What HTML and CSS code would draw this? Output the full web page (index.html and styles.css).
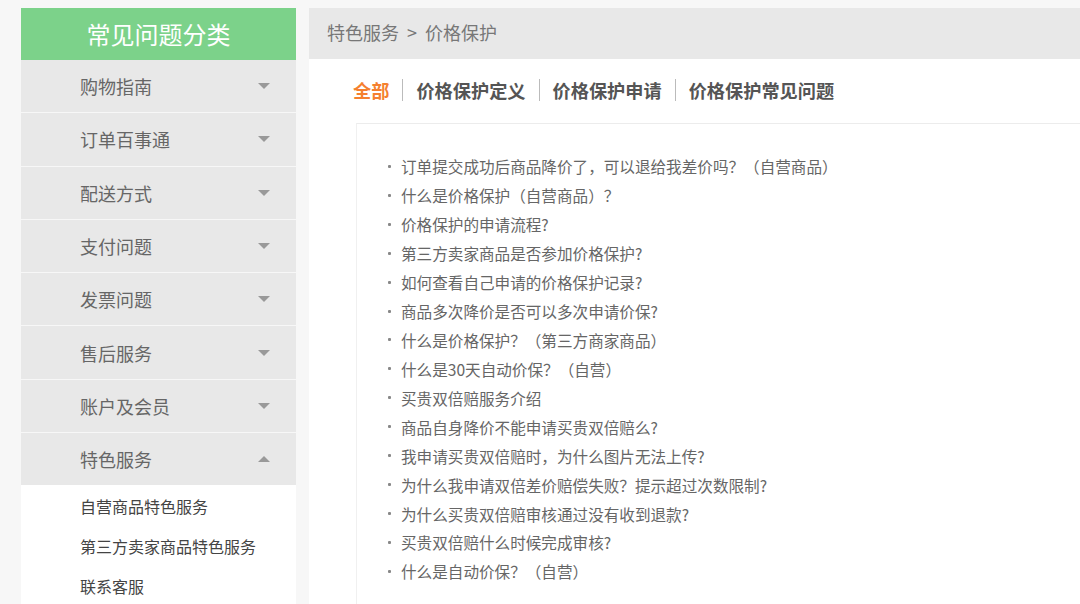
FILE: index.html
```html
<!DOCTYPE html>
<html lang="zh-CN">

<head>
    <meta charset="UTF-8">
    <meta name="viewport" content="width=device-width, initial-scale=1.0">
    <title>常见问题 - 价格保护</title>
    <link rel="stylesheet" href="styles.css">
</head>

<body>

    <div class="page">

        <!-- Sidebar -->
        <div class="sidebar">
            <div class="sidebar-title">常见问题分类</div>
            <ul class="menu">
                <li class="menu-item"><span>购物指南</span><i class="arrow down"></i></li>
                <li class="menu-item"><span>订单百事通</span><i class="arrow down"></i></li>
                <li class="menu-item"><span>配送方式</span><i class="arrow down"></i></li>
                <li class="menu-item"><span>支付问题</span><i class="arrow down"></i></li>
                <li class="menu-item"><span>发票问题</span><i class="arrow down"></i></li>
                <li class="menu-item"><span>售后服务</span><i class="arrow down"></i></li>
                <li class="menu-item"><span>账户及会员</span><i class="arrow down"></i></li>
                <li class="menu-item open"><span>特色服务</span><i class="arrow up"></i></li>
            </ul>
            <ul class="submenu">
                <li>自营商品特色服务</li>
                <li>第三方卖家商品特色服务</li>
                <li>联系客服</li>
            </ul>
        </div>

        <!-- Main -->
        <div class="main">
            <div class="crumbs">特色服务<span class="sep">&gt;</span>价格保护</div>

            <div class="tabs">
                <span class="tab active">全部</span>
                <span class="tab">价格保护定义</span>
                <span class="tab">价格保护申请</span>
                <span class="tab">价格保护常见问题</span>
            </div>

            <div class="faq-box">
                <ul class="faq-list">
                    <li>订单提交成功后商品降价了，可以退给我差价吗？（自营商品）</li>
                    <li>什么是价格保护（自营商品）？</li>
                    <li>价格保护的申请流程?</li>
                    <li>第三方卖家商品是否参加价格保护?</li>
                    <li>如何查看自己申请的价格保护记录?</li>
                    <li>商品多次降价是否可以多次申请价保?</li>
                    <li>什么是价格保护？（第三方商家商品）</li>
                    <li>什么是30天自动价保？（自营）</li>
                    <li>买贵双倍赔服务介绍</li>
                    <li>商品自身降价不能申请买贵双倍赔么?</li>
                    <li>我申请买贵双倍赔时，为什么图片无法上传?</li>
                    <li>为什么我申请双倍差价赔偿失败？提示超过次数限制?</li>
                    <li>为什么买贵双倍赔审核通过没有收到退款?</li>
                    <li>买贵双倍赔什么时候完成审核?</li>
                    <li>什么是自动价保？（自营）</li>
                </ul>
            </div>
        </div>

    </div>

</body>

</html>
```

FILE: styles.css
```css
body {
    margin: 0;
    background-color: #f7f7f7;
    font-family: "Noto Sans CJK SC", "Noto Sans", sans-serif;
    overflow: hidden;
}

ul {
    list-style: none;
    margin: 0;
    padding: 0;
}

.page {
    display: flex;
    align-items: flex-start;
    gap: 13px;
    padding: 8px 0 0 21px;
    height: 596px;
}

/* Sidebar */
.sidebar {
    width: 275px;
    flex-shrink: 0;
}

.sidebar-title {
    height: 52px;
    line-height: 52px;
    background-color: #7cd28a;
    color: #fff;
    font-size: 24px;
    text-align: center;
}

.menu-item {
    display: flex;
    align-items: center;
    justify-content: space-between;
    height: 52.3px;
    padding: 0 26px 0 59px;
    border-bottom: 1px solid #f7f7f7;
    background-color: #e8e8e8;
    color: #666;
    font-size: 18px;
}

.menu-item.open {
    border-bottom: none;
}

.arrow {
    width: 0;
    height: 0;
    border-left: 6px solid transparent;
    border-right: 6px solid transparent;
}

.arrow.down {
    border-top: 6px solid #999;
}

.arrow.up {
    border-bottom: 6px solid #999;
}

.submenu {
    background-color: #fff;
    padding-top: 1px;
}

.submenu li {
    height: 40px;
    line-height: 40px;
    padding-left: 59px;
    color: #444;
    font-size: 16px;
}

/* Main */
.main {
    flex: 1;
    min-width: 820px;
    align-self: stretch;
    background-color: #fff;
}

.crumbs {
    height: 51px;
    line-height: 49px;
    padding-left: 18px;
    background-color: #e8e8e8;
    color: #777;
    font-size: 18px;
}

.crumbs .sep {
    margin: 0 8px;
}

.tabs {
    display: flex;
    align-items: center;
    margin: 19px 0 21px 44px;
    height: 24px;
}

.tab {
    padding: 0 13px;
    border-left: 1px solid #bbb;
    line-height: 22px;
    color: #555;
    font-size: 18.2px;
    font-weight: bold;
}

.tab:first-child {
    padding-left: 0;
    border-left: none;
}

.tab.active {
    color: #f5802f;
}

.faq-box {
    margin-left: 47px;
    padding: 28px 0 20px 31px;
    border-top: 1px solid #ececec;
    border-left: 1px solid #f0f0f0;
    min-height: 500px;
}

.faq-list li {
    display: flex;
    align-items: center;
    height: 28.93px;
    color: #666;
    font-size: 15.6px;
}

.faq-list li::before {
    content: "";
    width: 3px;
    height: 3px;
    margin-right: 10px;
    background-color: #888;
    border-radius: 1px;
}
```
